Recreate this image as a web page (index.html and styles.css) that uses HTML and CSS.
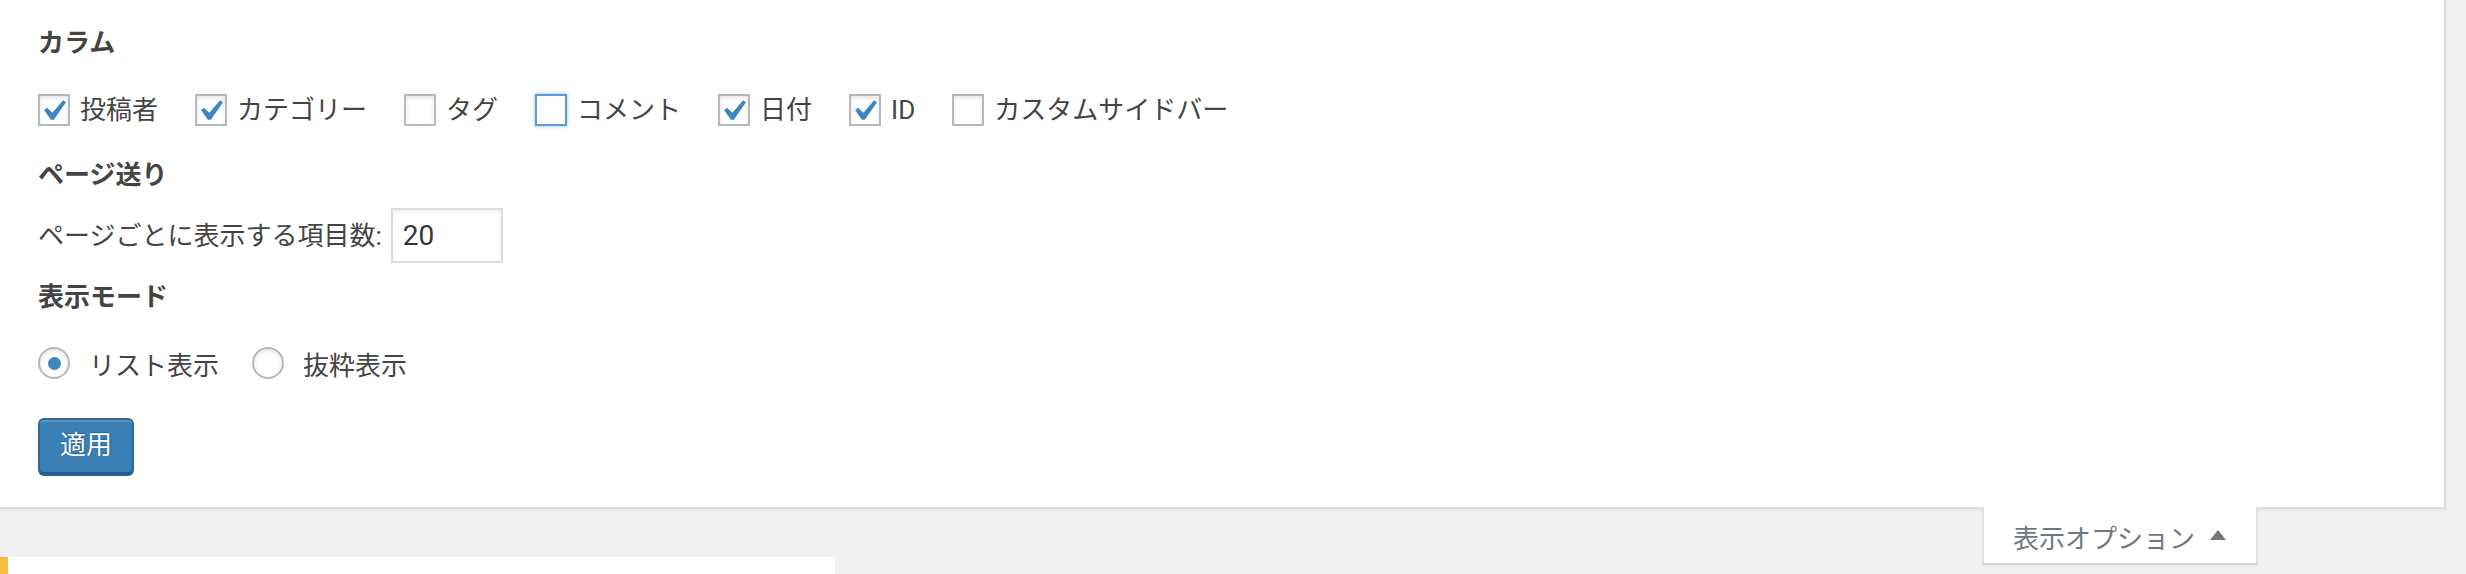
FILE: index.html
```html
<!DOCTYPE html>
<html lang="ja">
<head>
<meta charset="utf-8">
<title>表示オプション</title>
<link rel="stylesheet" href="styles.css">
</head>
<body>
<div class="screen-meta">
  <div class="screen-options">
    <h5 class="opt-heading">カラム</h5>
    <div class="cb-row">
      <label class="cb-label"><span class="cb"><svg viewBox="2 2 28 28"><path d="M25.1 6.3L28 8.2L15.8 25.8H12.9L6.1 16.3L9 13.7L14.4 18.7Z"/></svg></span>投稿者</label>
      <label class="cb-label"><span class="cb"><svg viewBox="2 2 28 28"><path d="M25.1 6.3L28 8.2L15.8 25.8H12.9L6.1 16.3L9 13.7L14.4 18.7Z"/></svg></span>カテゴリー</label>
      <label class="cb-label"><span class="cb"></span>タグ</label>
      <label class="cb-label"><span class="cb cb-focus"></span>コメント</label>
      <label class="cb-label"><span class="cb"><svg viewBox="2 2 28 28"><path d="M25.1 6.3L28 8.2L15.8 25.8H12.9L6.1 16.3L9 13.7L14.4 18.7Z"/></svg></span>日付</label>
      <label class="cb-label"><span class="cb"><svg viewBox="2 2 28 28"><path d="M25.1 6.3L28 8.2L15.8 25.8H12.9L6.1 16.3L9 13.7L14.4 18.7Z"/></svg></span>ID</label>
      <label class="cb-label"><span class="cb"></span>カスタムサイドバー</label>
    </div>

    <h5 class="opt-heading heading-pages">ページ送り</h5>
    <div class="per-page">
      <label class="per-page-label" for="per-page">ページごとに表示する項目数:</label>
      <input class="per-page-input" id="per-page" type="text" value="20">
    </div>

    <h5 class="opt-heading heading-mode">表示モード</h5>
    <div class="rb-row">
      <label class="rb-label"><span class="rb"><span class="rb-dot"></span></span>リスト表示</label>
      <label class="rb-label"><span class="rb"></span>抜粋表示</label>
    </div>

    <button class="btn-primary" type="button">適用</button>
  </div>
</div>

<div class="meta-links">
  <button class="meta-toggle" type="button">表示オプション<svg class="toggle-arrow" viewBox="0 0 16 10"><path d="M8 0L16 10H0Z"/></svg></button>
</div>

<div class="notice"></div>
</body>
</html>
```
FILE: styles.css
```css
html, body {
  margin: 0;
  padding: 0;
}

body {
  background: #f1f1f1;
  font-family: Roboto, "Noto Sans CJK JP", sans-serif;
  font-size: 26px;
  color: #444;
}

.screen-meta {
  background: #fff;
  margin-right: 20px;
  border-right: 2px solid #dedede;
  border-bottom: 2px solid #dedede;
  box-shadow: 0 2px 2px rgba(0, 0, 0, 0.04);
}

.screen-options {
  padding: 23px 0 33px 38px;
  display: flex;
  flex-direction: column;
  align-items: flex-start;
}

.opt-heading {
  margin: 0;
  height: 40px;
  line-height: 40px;
  font-size: 26px;
  font-weight: 700;
  color: #444;
}

.heading-pages {
  margin-top: 15px;
}

.heading-mode {
  margin-top: 14px;
}

/* checkboxes */
.cb-row {
  margin-top: 17px;
  height: 60px;
  display: flex;
  align-items: center;
}

.cb-label {
  display: flex;
  align-items: center;
  margin-right: 37px;
  white-space: nowrap;
  line-height: 60px;
}

.cb {
  flex: none;
  box-sizing: border-box;
  width: 32px;
  height: 32px;
  border: 2px solid #b4b9be;
  background: #fff;
  box-shadow: inset 0 2px 4px rgba(0, 0, 0, 0.1);
  margin-right: 10px;
  display: flex;
}

.cb svg {
  display: block;
  width: 28px;
  height: 28px;
  fill: #3d86bf;
}

.cb-focus {
  border-color: #5b9dd9;
  box-shadow: 0 0 3px rgba(30, 140, 190, 0.6);
}

/* per page */
.per-page {
  margin-top: 13px;
  display: flex;
  align-items: baseline;
  gap: 9px;
}

.per-page-label {
  font-size: 26px;
}

.per-page-input {
  box-sizing: border-box;
  width: 112px;
  height: 55px;
  margin: 0;
  padding: 0 10px;
  border: 2px solid #ddd;
  border-radius: 0;
  background: #fff;
  box-shadow: inset 0 2px 4px rgba(0, 0, 0, 0.07);
  font-family: Roboto, "Noto Sans CJK JP", sans-serif;
  font-size: 28px;
  color: #32373c;
  outline: none;
}

/* radios */
.rb-row {
  margin-top: 16px;
  height: 60px;
  display: flex;
  align-items: center;
}

.rb-label {
  display: flex;
  align-items: center;
  margin-right: 33px;
  white-space: nowrap;
}

.rb {
  flex: none;
  box-sizing: border-box;
  width: 32px;
  height: 32px;
  border: 2px solid #b4b9be;
  border-radius: 50%;
  background: #fff;
  box-shadow: inset 0 2px 4px rgba(0, 0, 0, 0.1);
  margin-right: 19px;
  display: flex;
  align-items: center;
  justify-content: center;
}

.rb-dot {
  width: 13px;
  height: 13px;
  border-radius: 50%;
  background: #3d86bf;
}

/* primary button */
.btn-primary {
  margin-top: 25px;
  box-sizing: border-box;
  height: 56px;
  padding: 0 20px 2px;
  border: 2px solid #2d6a9c;
  border-bottom-color: #26598a;
  border-radius: 6px;
  background: #3a7fb5;
  box-shadow: inset 0 2px 0 rgba(120, 170, 210, 0.5), 0 2px 0 #2a6190;
  color: #fff;
  font-family: Roboto, "Noto Sans CJK JP", sans-serif;
  font-size: 26px;
  line-height: 50px;
  text-shadow: 0 -1px 1px #2a6496, 1px 0 1px #2a6496;
  cursor: pointer;
}

/* screen options tab */
.meta-links {
  display: flex;
  justify-content: flex-end;
  padding-right: 208px;
}

.meta-toggle {
  position: relative;
  z-index: 1;
  margin-top: -2px;
  box-sizing: border-box;
  height: 58px;
  padding: 3px 30px 0 29px;
  display: flex;
  align-items: center;
  gap: 15px;
  background: #fff;
  border: 2px solid #e1e1e1;
  border-top: none;
  border-bottom-color: #d4d4d4;
  box-shadow: 0 2px 2px rgba(0, 0, 0, 0.04);
  color: #72777c;
  font-family: Roboto, "Noto Sans CJK JP", sans-serif;
  font-size: 26px;
  cursor: pointer;
}

.toggle-arrow {
  display: block;
  width: 16px;
  height: 10px;
  fill: #72777c;
  margin-top: -4px;
}

/* notice below */
.notice {
  margin-top: -8px;
  width: 827px;
  height: 17px;
  background: #fff;
  border-left: 8px solid #f7bd3e;
}
```
